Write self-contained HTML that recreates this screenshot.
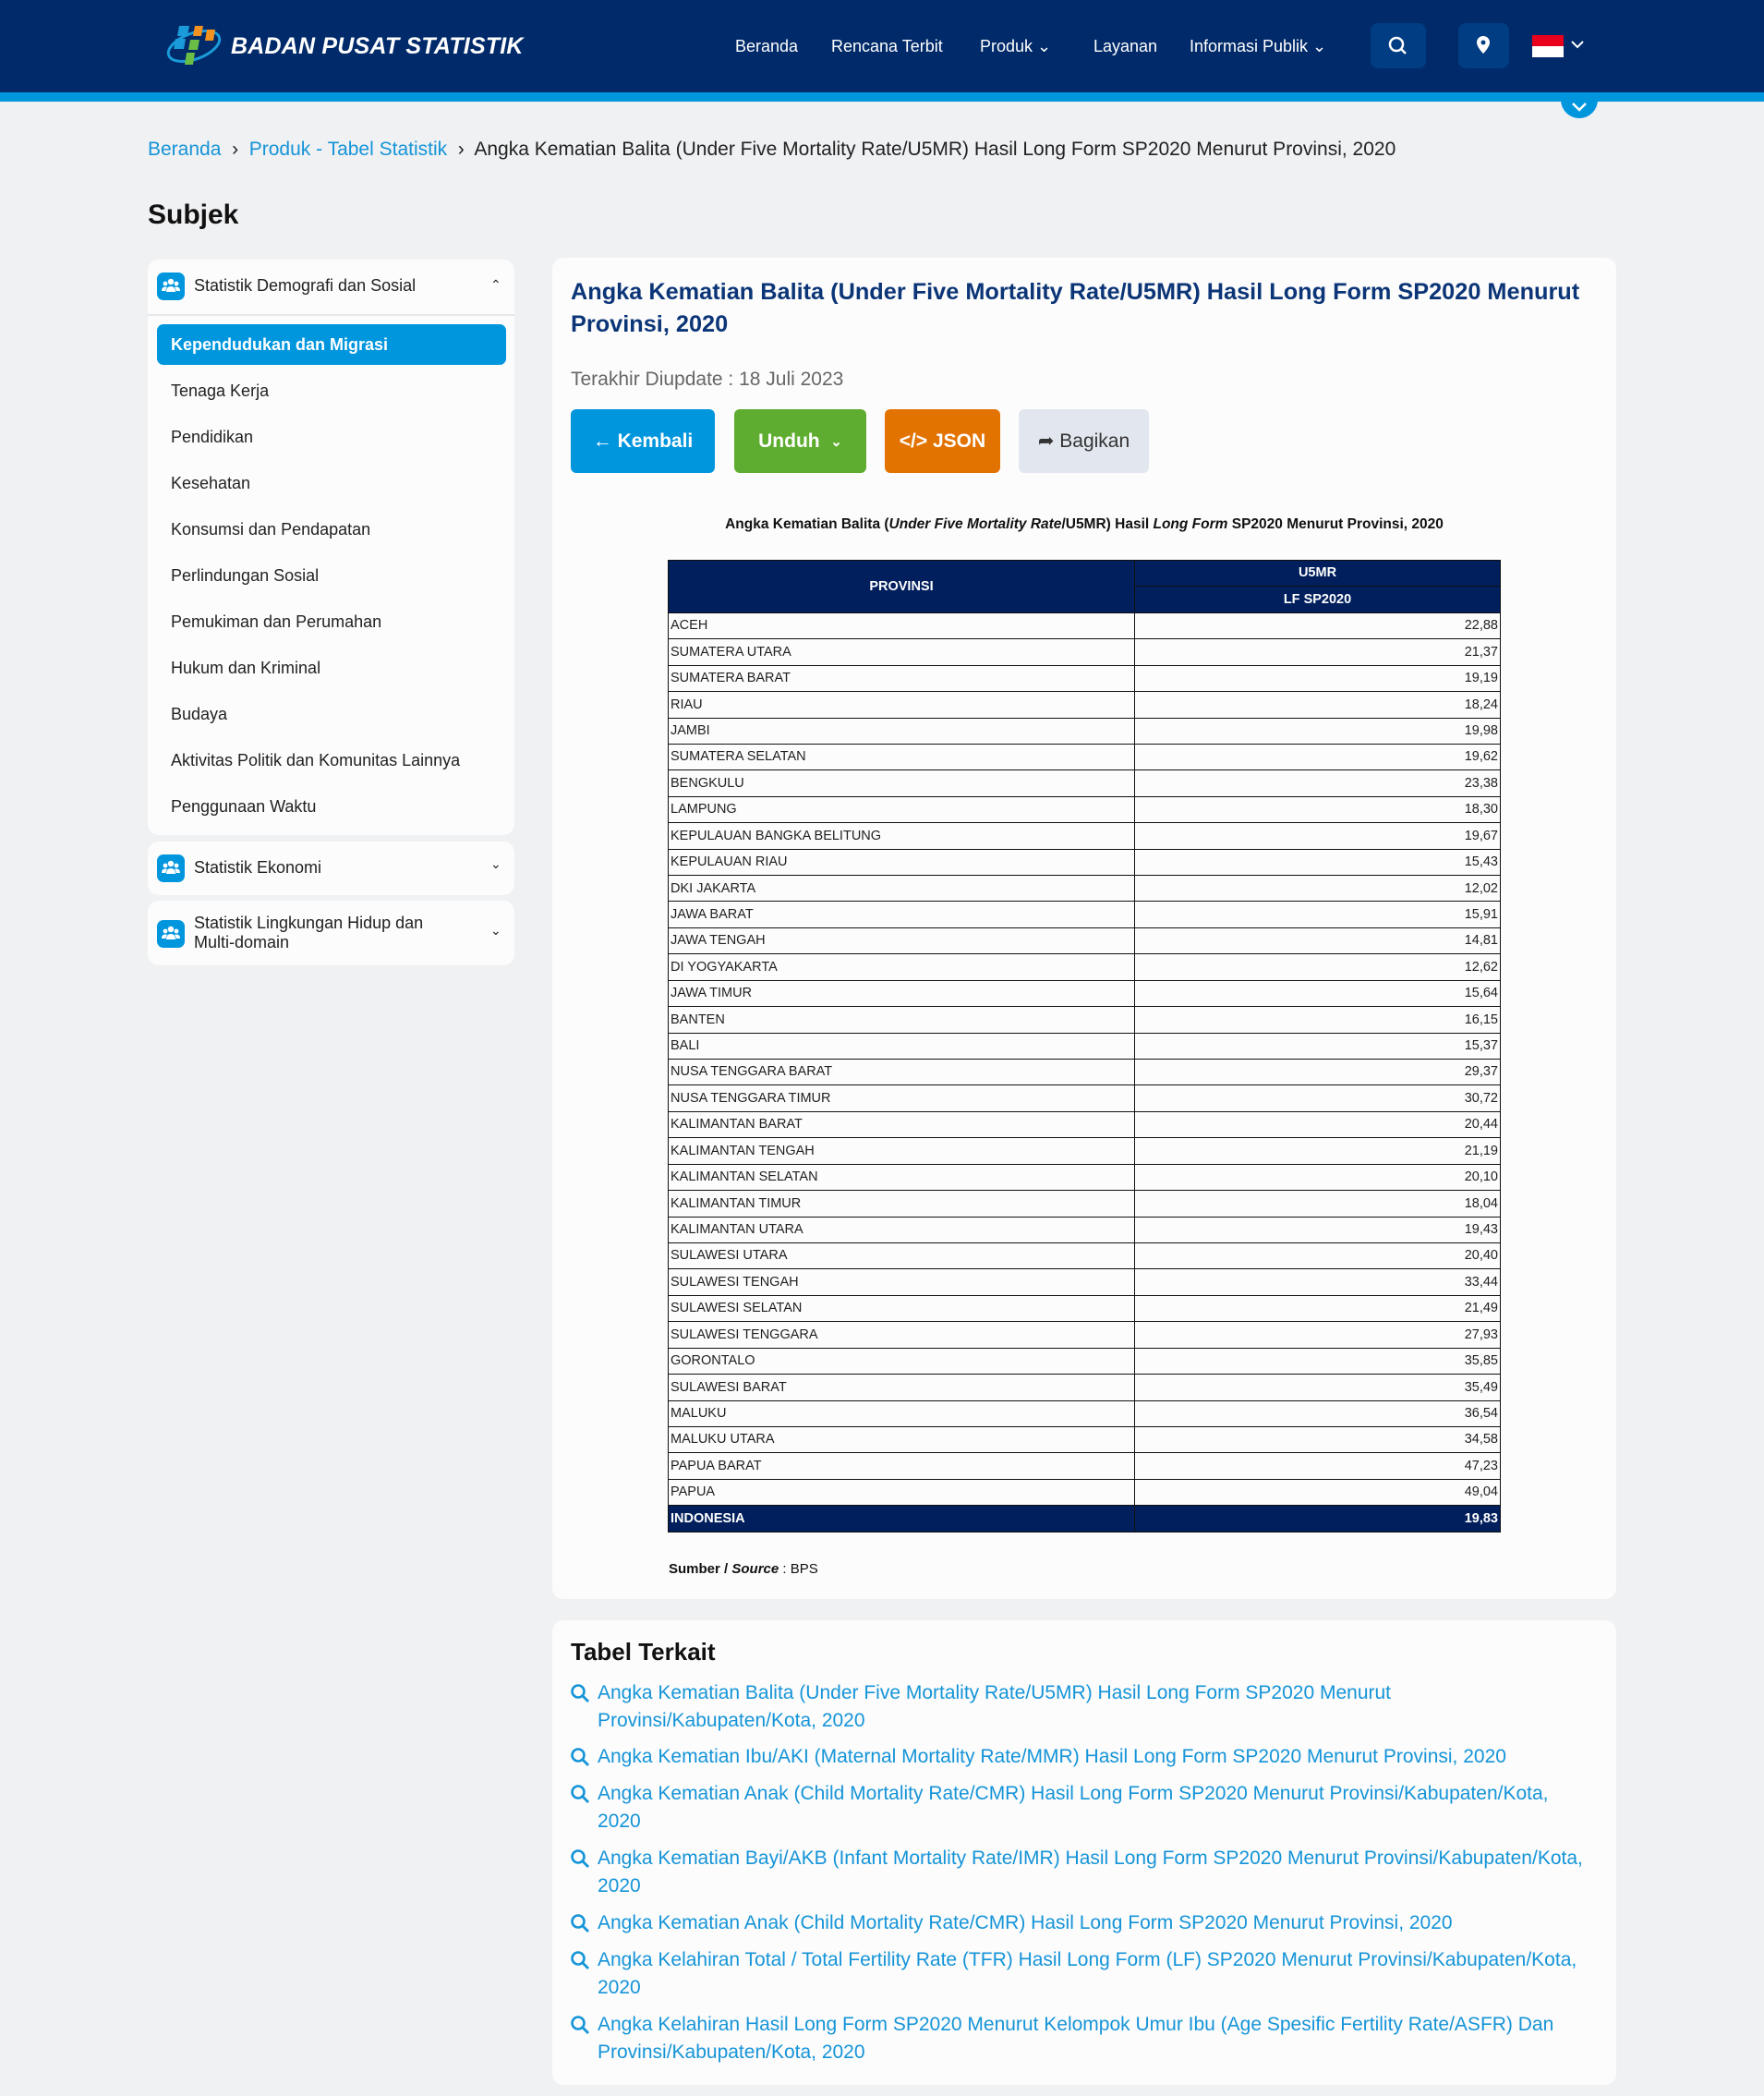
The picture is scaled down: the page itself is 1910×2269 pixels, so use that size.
<!DOCTYPE html>
<html><head><meta charset="utf-8">
<style>
*{box-sizing:border-box;margin:0;padding:0}
body{width:1910px;height:2269px;background:#f0f1f3;font-family:"Liberation Sans",sans-serif;position:relative;overflow:hidden;color:#1f1f1f}
.abs{position:absolute}
.hdr{left:0;top:0;width:1910px;height:100px;background:#002a69;z-index:2}
.stripe{left:0;top:100px;width:1910px;height:10px;background:#0096de;z-index:2}
.nav{top:40px;color:#fff;font-size:18px;font-weight:500;z-index:3}
.btnh{top:25px;width:60px;height:49px;background:#003d82;border-radius:8px;z-index:3}
.card{background:#fcfcfc;border-radius:12px}
.sb-item{left:185px;font-size:18px;color:#222}
.icon{width:30px;height:30px;background:#0096de;border-radius:7px}
.btn{top:443px;height:69px;border-radius:6px;color:#fff;font-size:21px;font-weight:bold;display:flex;align-items:center;justify-content:center}
table{border-collapse:collapse;position:absolute;left:723px;top:606px;width:901px;font-size:14.5px;table-layout:fixed}
td{border:1.5px solid #111;height:28.43px;padding:0 2px;line-height:1;white-space:nowrap}
td.n{text-align:right}
tr.h td{background:#001f5c;color:#fff;font-weight:bold;text-align:center}
tr.tot td{background:#001f5c;color:#fff;font-weight:bold}
.lnk{left:647px;width:1080px;color:#1594d8;font-size:21px;line-height:30px}
.mag{left:617px;width:22px;height:22px}
</style></head><body>
<svg width="0" height="0" style="position:absolute"><defs>
<g id="m"><circle cx="9" cy="9" r="6.5" fill="none" stroke="#1594d8" stroke-width="2.6"/><line x1="14" y1="14" x2="20" y2="20" stroke="#1594d8" stroke-width="2.8"/></g>
<g id="ppl" fill="#fff"><circle cx="15" cy="10" r="3.2"/><circle cx="9" cy="12" r="2.4"/><circle cx="21" cy="12" r="2.4"/><path d="M10 21c0-4 2-6 5-6s5 2 5 6z"/><path d="M5 20c0-3 1.5-4.5 4-4.5 1 0 1.5.3 2 .6-1 1-1.5 2.3-1.5 3.9z"/><path d="M25 20c0-3-1.5-4.5-4-4.5-1 0-1.5.3-2 .6 1 1 1.5 2.3 1.5 3.9z"/></g>
</defs></svg>
<div class="abs hdr"></div>
<div class="abs stripe"></div>
<div class="abs" style="left:1690px;top:88px;width:40px;height:40px;border-radius:50%;background:#0096de;z-index:1"></div>
<svg class="abs" style="left:1700px;top:109px;z-index:3" width="20" height="14"><path d="M3 3l7 7 7-7" stroke="#fff" stroke-width="2.5" fill="none"/></svg>
<svg class="abs" style="left:178px;top:22px;z-index:3" width="64" height="52" viewBox="0 0 64 52">
<ellipse cx="32" cy="28" rx="29" ry="14" fill="none" stroke="#1a9ad8" stroke-width="3" transform="rotate(-20 32 28)"/>
<polygon points="16,6 27,6 25,17 14,17" fill="#1a9ad8"/><polygon points="12,20 23,20 21,31 10,31" fill="#1a9ad8"/>
<polygon points="33,6 42,6 40,17 31,17" fill="#f29221"/><polygon points="46,10 55,10 53,22 44,22" fill="#f29221"/>
<polygon points="28,21 38,21 36,32 26,32" fill="#6abd45"/><polygon points="24,35 33,35 31,48 22,48" fill="#6abd45"/>
</svg>
<div class="abs" style="left:250px;top:36px;color:#fff;font-size:25px;font-weight:bold;font-style:italic;letter-spacing:0.2px;z-index:3">BADAN PUSAT STATISTIK</div>
<div class="abs nav" style="left:796px">Beranda</div>
<div class="abs nav" style="left:900px">Rencana Terbit</div>
<div class="abs nav" style="left:1061px">Produk ⌄</div>
<div class="abs nav" style="left:1184px">Layanan</div>
<div class="abs nav" style="left:1288px">Informasi Publik ⌄</div>
<div class="abs btnh" style="left:1484px"><svg width="60" height="49"><circle cx="28" cy="23" r="7" fill="none" stroke="#fff" stroke-width="2.5"/><line x1="33" y1="28" x2="38" y2="33" stroke="#fff" stroke-width="2.5"/></svg></div>
<div class="abs btnh" style="left:1579px;width:55px"><svg width="55" height="49"><path d="M27 14a7 7 0 0 1 7 7c0 5-7 12-7 12s-7-7-7-12a7 7 0 0 1 7-7z" fill="#fff"/><circle cx="27" cy="21" r="2.5" fill="#003d82"/></svg></div>
<div class="abs" style="left:1659px;top:38px;width:34px;height:12px;background:#e8001c;z-index:3"></div>
<div class="abs" style="left:1659px;top:50px;width:34px;height:12px;background:#fff;z-index:3"></div>
<svg class="abs" style="left:1700px;top:42px;z-index:3" width="16" height="12"><path d="M2 3l6 6 6-6" stroke="#fff" stroke-width="2" fill="none"/></svg>

<div class="abs" style="left:160px;top:150px;font-size:21px;white-space:nowrap"><span style="color:#1594d8">Beranda</span> &nbsp;›&nbsp; <span style="color:#1594d8">Produk - Tabel Statistik</span> &nbsp;›&nbsp; <span style="color:#222">Angka Kematian Balita (Under Five Mortality Rate/U5MR) Hasil Long Form SP2020 Menurut Provinsi, 2020</span></div>
<div class="abs" style="left:160px;top:216px;font-size:30px;font-weight:bold;color:#111">Subjek</div>

<div class="abs card" style="left:160px;top:281px;width:397px;height:623px"></div>
<div class="abs" style="left:160px;top:340px;width:397px;height:2px;background:#e6e7ea"></div>
<div class="abs icon" style="left:170px;top:295px"><svg width="30" height="30"><use href="#ppl"/></svg></div>
<div class="abs" style="left:210px;top:299px;font-size:18px">Statistik Demografi dan Sosial</div>
<div class="abs" style="left:531px;top:300px;font-size:14px">⌃</div>
<div class="abs" style="left:170px;top:351px;width:378px;height:44px;background:#0096de;border-radius:7px"></div>
<div class="abs" style="left:185px;top:363px;font-size:18px;color:#fff;font-weight:bold">Kependudukan dan Migrasi</div>
<div class="abs sb-item" style="top:413px">Tenaga Kerja</div>
<div class="abs sb-item" style="top:463px">Pendidikan</div>
<div class="abs sb-item" style="top:513px">Kesehatan</div>
<div class="abs sb-item" style="top:563px">Konsumsi dan Pendapatan</div>
<div class="abs sb-item" style="top:613px">Perlindungan Sosial</div>
<div class="abs sb-item" style="top:663px">Pemukiman dan Perumahan</div>
<div class="abs sb-item" style="top:713px">Hukum dan Kriminal</div>
<div class="abs sb-item" style="top:763px">Budaya</div>
<div class="abs sb-item" style="top:813px">Aktivitas Politik dan Komunitas Lainnya</div>
<div class="abs sb-item" style="top:863px">Penggunaan Waktu</div>

<div class="abs card" style="left:160px;top:911px;width:397px;height:58px"></div>
<div class="abs icon" style="left:170px;top:925px"><svg width="30" height="30"><use href="#ppl"/></svg></div>
<div class="abs" style="left:210px;top:929px;font-size:18px">Statistik Ekonomi</div>
<div class="abs" style="left:531px;top:927px;font-size:14px">⌄</div>
<div class="abs card" style="left:160px;top:975px;width:397px;height:70px"></div>
<div class="abs icon" style="left:170px;top:996px"><svg width="30" height="30"><use href="#ppl"/></svg></div>
<div class="abs" style="left:210px;top:989px;font-size:18px;line-height:21px">Statistik Lingkungan Hidup dan<br>Multi-domain</div>
<div class="abs" style="left:531px;top:999px;font-size:14px">⌄</div>

<div class="abs card" style="left:598px;top:279px;width:1152px;height:1452px"></div>
<div class="abs" style="left:618px;top:299px;width:1128px;font-size:25.3px;font-weight:bold;color:#0b3577;line-height:35px">Angka Kematian Balita (Under Five Mortality Rate/U5MR) Hasil Long Form SP2020 Menurut Provinsi, 2020</div>
<div class="abs" style="left:618px;top:399px;font-size:21px;color:#666">Terakhir Diupdate : 18 Juli 2023</div>
<div class="abs btn" style="left:618px;width:156px;background:#0096de">← Kembali</div>
<div class="abs btn" style="left:795px;width:143px;background:#5fad30">Unduh &nbsp;<span style="font-size:15px">⌄</span></div>
<div class="abs btn" style="left:958px;width:125px;background:#e37300">&lt;/&gt; JSON</div>
<div class="abs btn" style="left:1103px;width:141px;background:#e2e7ef;color:#333;font-weight:normal">➦ Bagikan</div>
<div class="abs" style="left:598px;top:559px;width:1152px;text-align:center;font-size:15.5px;font-weight:bold;color:#111">Angka Kematian Balita (<i>Under Five Mortality Rate</i>/U5MR) Hasil <i>Long Form</i> SP2020 Menurut Provinsi, 2020</div>

<table>
<colgroup><col style="width:505px"><col style="width:396px"></colgroup>
<tr class="h"><td rowspan="2">PROVINSI</td><td>U5MR</td></tr>
<tr class="h"><td>LF SP2020</td></tr>
<tr><td>ACEH</td><td class="n">22,88</td></tr>
<tr><td>SUMATERA UTARA</td><td class="n">21,37</td></tr>
<tr><td>SUMATERA BARAT</td><td class="n">19,19</td></tr>
<tr><td>RIAU</td><td class="n">18,24</td></tr>
<tr><td>JAMBI</td><td class="n">19,98</td></tr>
<tr><td>SUMATERA SELATAN</td><td class="n">19,62</td></tr>
<tr><td>BENGKULU</td><td class="n">23,38</td></tr>
<tr><td>LAMPUNG</td><td class="n">18,30</td></tr>
<tr><td>KEPULAUAN BANGKA BELITUNG</td><td class="n">19,67</td></tr>
<tr><td>KEPULAUAN RIAU</td><td class="n">15,43</td></tr>
<tr><td>DKI JAKARTA</td><td class="n">12,02</td></tr>
<tr><td>JAWA BARAT</td><td class="n">15,91</td></tr>
<tr><td>JAWA TENGAH</td><td class="n">14,81</td></tr>
<tr><td>DI YOGYAKARTA</td><td class="n">12,62</td></tr>
<tr><td>JAWA TIMUR</td><td class="n">15,64</td></tr>
<tr><td>BANTEN</td><td class="n">16,15</td></tr>
<tr><td>BALI</td><td class="n">15,37</td></tr>
<tr><td>NUSA TENGGARA BARAT</td><td class="n">29,37</td></tr>
<tr><td>NUSA TENGGARA TIMUR</td><td class="n">30,72</td></tr>
<tr><td>KALIMANTAN BARAT</td><td class="n">20,44</td></tr>
<tr><td>KALIMANTAN TENGAH</td><td class="n">21,19</td></tr>
<tr><td>KALIMANTAN SELATAN</td><td class="n">20,10</td></tr>
<tr><td>KALIMANTAN TIMUR</td><td class="n">18,04</td></tr>
<tr><td>KALIMANTAN UTARA</td><td class="n">19,43</td></tr>
<tr><td>SULAWESI UTARA</td><td class="n">20,40</td></tr>
<tr><td>SULAWESI TENGAH</td><td class="n">33,44</td></tr>
<tr><td>SULAWESI SELATAN</td><td class="n">21,49</td></tr>
<tr><td>SULAWESI TENGGARA</td><td class="n">27,93</td></tr>
<tr><td>GORONTALO</td><td class="n">35,85</td></tr>
<tr><td>SULAWESI BARAT</td><td class="n">35,49</td></tr>
<tr><td>MALUKU</td><td class="n">36,54</td></tr>
<tr><td>MALUKU UTARA</td><td class="n">34,58</td></tr>
<tr><td>PAPUA BARAT</td><td class="n">47,23</td></tr>
<tr><td>PAPUA</td><td class="n">49,04</td></tr>
<tr class="tot"><td>INDONESIA</td><td class="n">19,83</td></tr>
</table>
<div class="abs" style="left:724px;top:1690px;font-size:15px;color:#111"><b>Sumber / <i>Source</i></b> : BPS</div>

<div class="abs card" style="left:598px;top:1754px;width:1152px;height:503px"></div>
<div class="abs" style="left:618px;top:1773px;font-size:26px;font-weight:bold;color:#111">Tabel Terkait</div>
<svg class="abs mag" style="top:1822px"><use href="#m"/></svg>
<div class="abs lnk" style="top:1818px">Angka Kematian Balita (Under Five Mortality Rate/U5MR) Hasil Long Form SP2020 Menurut<br>Provinsi/Kabupaten/Kota, 2020</div>
<svg class="abs mag" style="top:1891px"><use href="#m"/></svg>
<div class="abs lnk" style="top:1887px">Angka Kematian Ibu/AKI (Maternal Mortality Rate/MMR) Hasil Long Form SP2020 Menurut Provinsi, 2020</div>
<svg class="abs mag" style="top:1931px"><use href="#m"/></svg>
<div class="abs lnk" style="top:1927px">Angka Kematian Anak (Child Mortality Rate/CMR) Hasil Long Form SP2020 Menurut Provinsi/Kabupaten/Kota,<br>2020</div>
<svg class="abs mag" style="top:2001px"><use href="#m"/></svg>
<div class="abs lnk" style="top:1997px">Angka Kematian Bayi/AKB (Infant Mortality Rate/IMR) Hasil Long Form SP2020 Menurut Provinsi/Kabupaten/Kota,<br>2020</div>
<svg class="abs mag" style="top:2071px"><use href="#m"/></svg>
<div class="abs lnk" style="top:2067px">Angka Kematian Anak (Child Mortality Rate/CMR) Hasil Long Form SP2020 Menurut Provinsi, 2020</div>
<svg class="abs mag" style="top:2111px"><use href="#m"/></svg>
<div class="abs lnk" style="top:2107px">Angka Kelahiran Total / Total Fertility Rate (TFR) Hasil Long Form (LF) SP2020 Menurut Provinsi/Kabupaten/Kota,<br>2020</div>
<svg class="abs mag" style="top:2181px"><use href="#m"/></svg>
<div class="abs lnk" style="top:2177px">Angka Kelahiran Hasil Long Form SP2020 Menurut Kelompok Umur Ibu (Age Spesific Fertility Rate/ASFR) Dan<br>Provinsi/Kabupaten/Kota, 2020</div>
</body></html>
